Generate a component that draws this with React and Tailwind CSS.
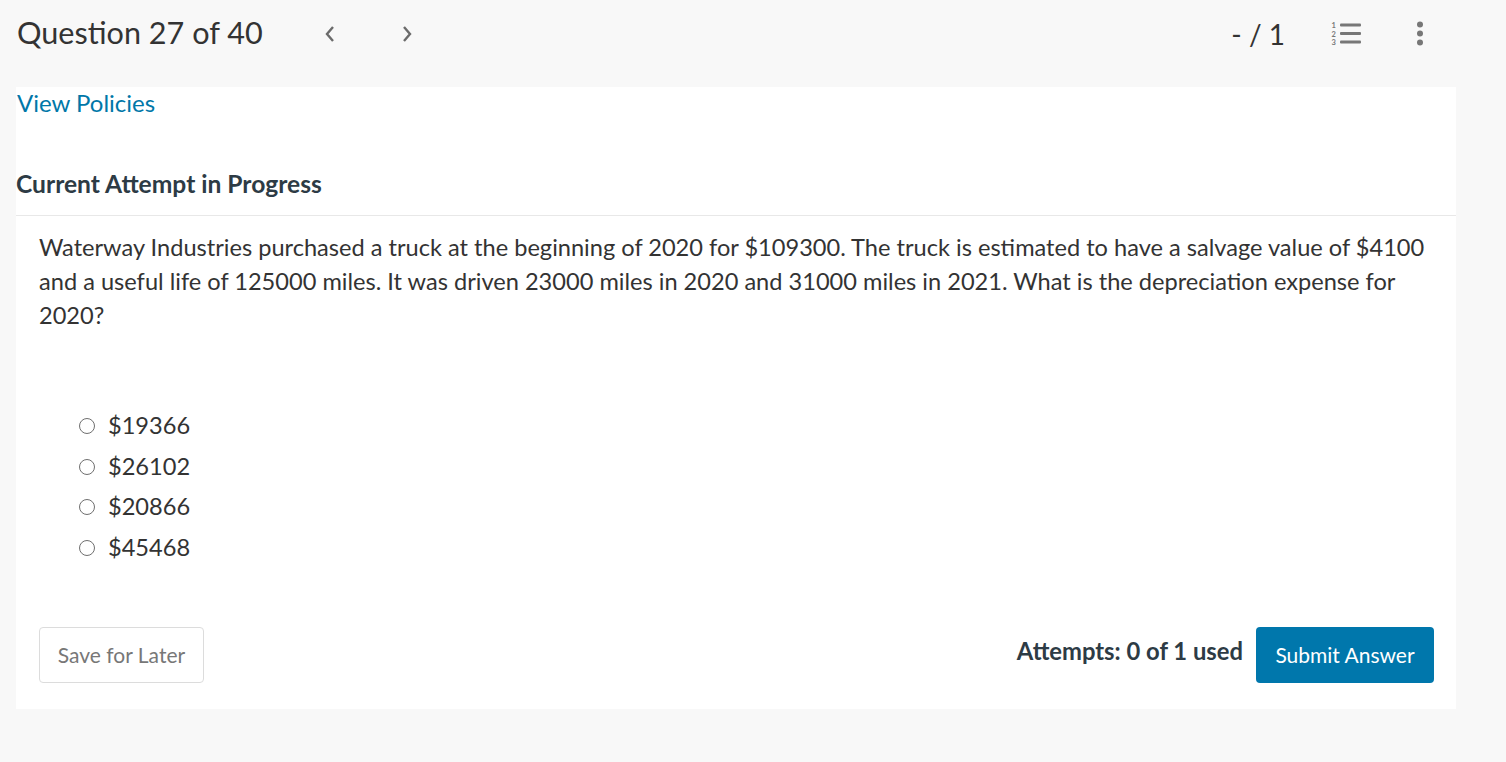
export default function App() {
  const font = { fontFamily: 'Lato, "Open Sans", sans-serif' };
  const options = ["$19366", "$26102", "$20866", "$45468"];
  return (
    <div className="min-h-[762px] w-full bg-[#f8f8f8] text-[#333]" style={font}>
      {/* header */}
      <div className="flex h-[87px] items-center pl-[17px] pb-[20px]">
        <div className="text-[30.6px] leading-none text-[#333]">Question 27 of 40</div>
        <div className="ml-[61px] flex items-center">
          <svg width="12" height="18" viewBox="0 0 12 18" className="mr-[65px]">
            <path d="M9 2 L3 9 L9 16" fill="none" stroke="#6b6b6b" strokeWidth="2.4" />
          </svg>
          <svg width="12" height="18" viewBox="0 0 12 18">
            <path d="M3 2 L9 9 L3 16" fill="none" stroke="#6b6b6b" strokeWidth="2.4" />
          </svg>
        </div>
        <div className="ml-auto flex items-center">
          <div className="text-[28px] leading-none text-[#333]">- / 1</div>
          <svg width="32" height="27" viewBox="0 0 32 27" className="ml-[46px] overflow-visible">
            <text x="0.5" y="8" fontSize="7.5" fill="#777" fontFamily="Lato, sans-serif" fontWeight="700">1</text>
            <text x="0.5" y="16.5" fontSize="7.5" fill="#777" fontFamily="Lato, sans-serif" fontWeight="700">2</text>
            <text x="0.5" y="25" fontSize="7.5" fill="#777" fontFamily="Lato, sans-serif" fontWeight="700">3</text>
            <rect x="9" y="3.5" width="21" height="3" rx="1" fill="#777" />
            <rect x="9" y="12" width="21" height="3" rx="1" fill="#777" />
            <rect x="9" y="20.5" width="21" height="3" rx="1" fill="#777" />
          </svg>
          <svg width="8" height="26" viewBox="0 0 8 26" className="ml-[53px] mr-[82px]">
            <circle cx="4" cy="3.5" r="3" fill="#777" />
            <circle cx="4" cy="12.5" r="3" fill="#777" />
            <circle cx="4" cy="21.5" r="3" fill="#777" />
          </svg>
        </div>
      </div>

      {/* panel */}
      <div className="ml-[16px] w-[1440px] bg-white">
        <div className="pl-[1px] pt-[2px]">
          <a className="text-[24px] leading-[28px] text-[#0077a8]">View Policies</a>
        </div>
        <div className="mt-[52px] pb-[17px] text-[24.6px] font-bold leading-[28px] text-[#2d3b45]">
          Current Attempt in Progress
        </div>
        <div className="border-t border-[#e8e8e8]" />
        <div className="pl-[23px] pr-[22px] pt-[14px]">
          <p className="w-[1400px] text-[23.6px] leading-[34px] text-[#333]">
            Waterway Industries purchased a truck at the beginning of 2020 for $109300. The truck is estimated to have a salvage value of $4100 and a useful life of 125000 miles. It was driven 23000 miles in 2020 and 31000 miles in 2021. What is the depreciation expense for 2020?
          </p>
          <div className="mt-[74px] ml-[40px] flex flex-col">
            {options.map((o) => (
              <label key={o} className="flex h-[40.5px] items-center">
                <span className="h-[16px] w-[16px] rounded-full border-[1.5px] border-[#6f6f6f] bg-white" />
                <span className="ml-[13px] text-[23.6px] leading-none text-[#333]">{o}</span>
              </label>
            ))}
          </div>
          <div className="mt-[59px] flex items-center pb-[26px]">
            <button className="h-[56px] w-[165px] rounded-[4px] border border-[#dcdcdc] bg-white text-[21px] text-[#777]">
              Save for Later
            </button>
            <div className="ml-auto -mt-[6px] text-[23.8px] font-bold text-[#2d3b45]">Attempts: 0 of 1 used</div>
            <button className="ml-[13px] h-[56px] w-[178px] rounded-[4px] bg-[#0077ac] text-[21px] text-white">
              Submit Answer
            </button>
          </div>
        </div>
      </div>
    </div>
  );
}
